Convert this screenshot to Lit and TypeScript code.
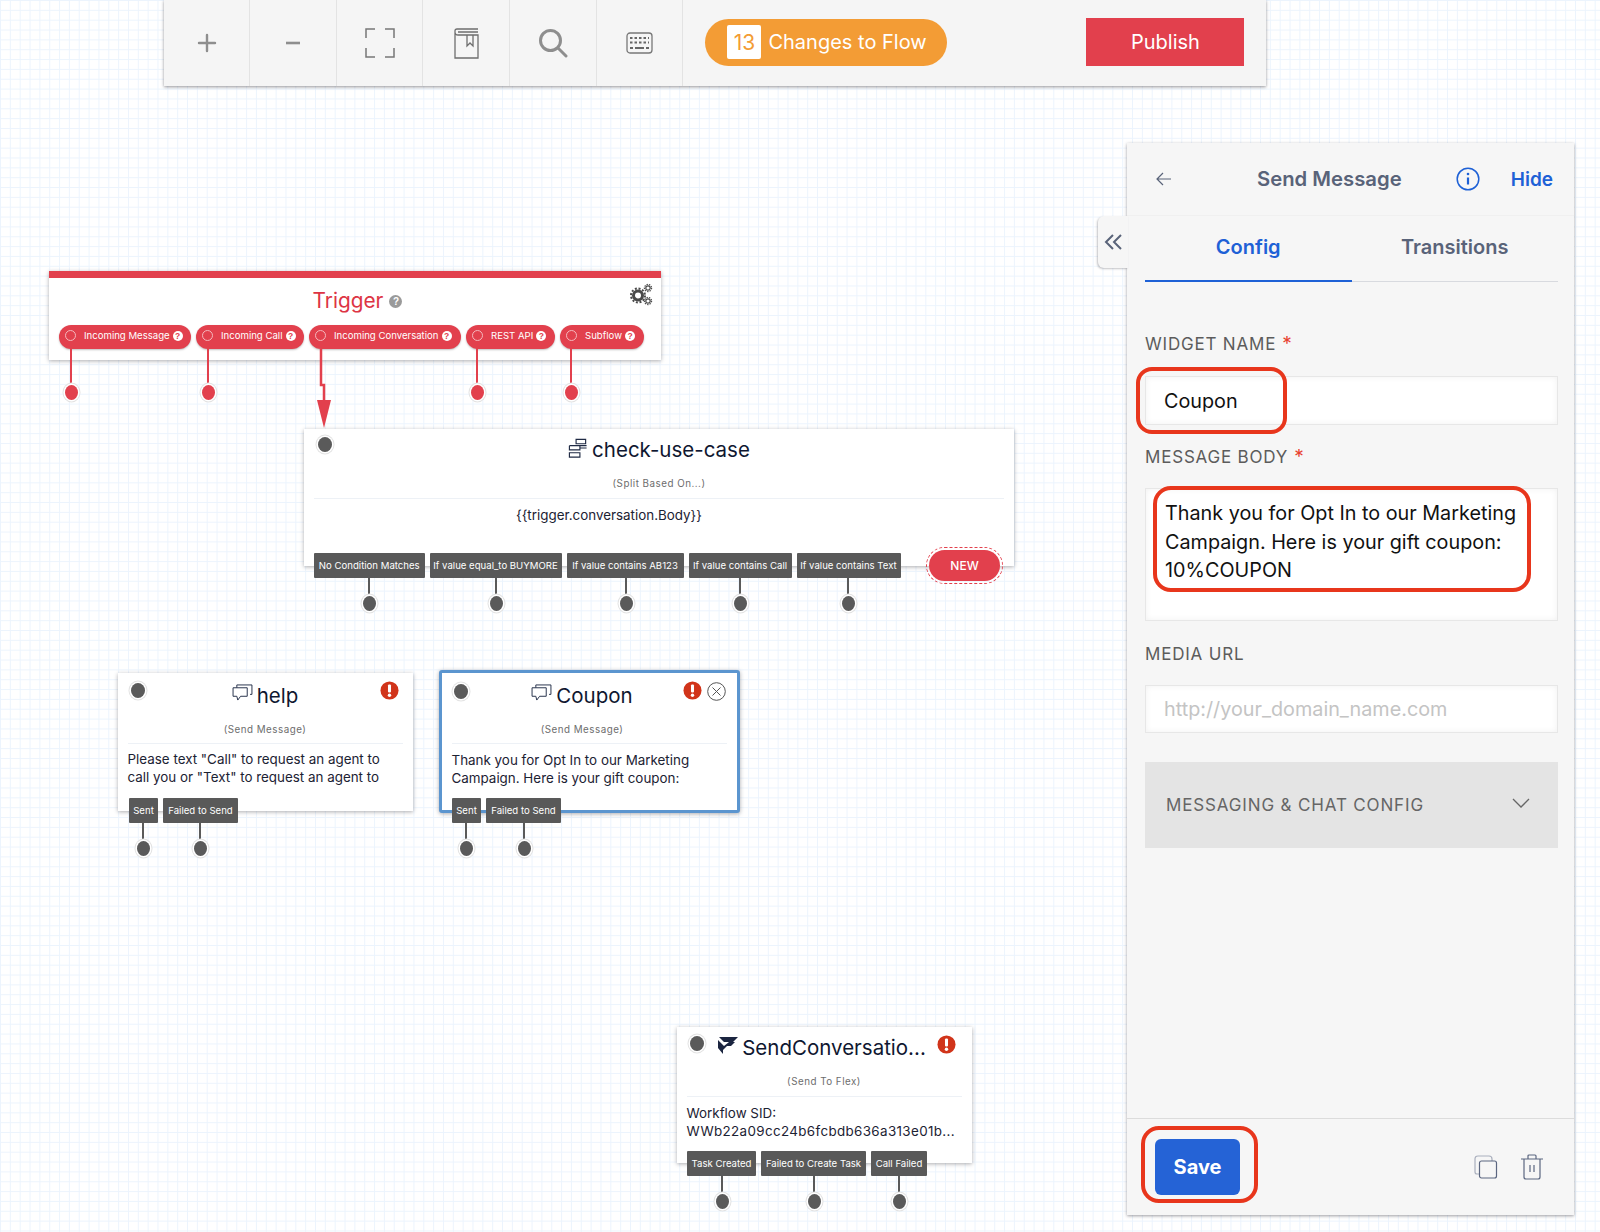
import { LitElement, html, css } from "lit";
import { customElement, property } from "lit/decorators.js";

const posStyle = (x: number, y: number, w?: number, h?: number) =>
  `left:${x}px;top:${y}px;` + (w !== undefined ? `width:${w}px;` : "") + (h !== undefined ? `height:${h}px;` : "");

const warn = html`<svg class="warn" viewBox="0 0 20 20" width="19" height="19"><circle cx="10" cy="10" r="9.5" fill="#d1341a"/><rect x="8.4" y="3.6" width="3.2" height="8.6" rx="1.2" fill="#fff"/><circle cx="10" cy="15" r="1.8" fill="#fff"/></svg>`;
const chat = html`<svg viewBox="0 0 22 18" width="21" height="17" fill="none" stroke="#1f2a44" stroke-width="1"><path d="M5 4V1h16v10h-2"/><path d="M1 4h15v9H9l-3 4-1-4H1z" fill="#fff"/></svg>`;

@customElement("flow-port")
class FlowPort extends LitElement {
  @property({ type: Number }) x = 0;
  @property({ type: Number }) y = 0;
  @property({ type: Number }) top = 0;
  @property() tone = "#5a5a5a";
  static styles = css`
    :host { position: absolute; display: block; width: 0; height: 0; }
    .line { position: absolute; width: 2px; left: -1px; }
    .dot { position: absolute; width: 13px; height: 15px; left: -6.5px; top: -7.5px; border-radius: 50%; box-shadow: 0 0 0 1.5px #fff, 0 0 0 2.5px #e3e3e3; }
  `;
  render() {
    return html`<div class="line" style="top:${this.top - this.y}px;height:${this.y - this.top}px;background:${this.tone}"></div>
      <div class="dot" style="background:${this.tone}"></div>`;
  }
  updated() { this.style.left = this.x + "px"; this.style.top = this.y + "px"; }
}

@customElement("app-root")
class AppRoot extends LitElement {
  static styles = css`
    :host { display: block; position: relative; width: 1600px; height: 1232px; overflow: hidden; background-color: #fff;
      background-image: linear-gradient(#ecf4fd 1px, transparent 1px), linear-gradient(90deg, #ecf4fd 1px, transparent 1px);
      background-size: 9.85px 9.85px; font-family: Inter, "Liberation Sans", sans-serif; color: #111; }
    * { box-sizing: border-box; }
    .toolbar { position: absolute; left: 164px; top: 0; width: 1102px; height: 86px; background: #f5f5f5; display: flex; align-items: center; box-shadow: 0 1px 3px rgba(60,60,70,.55); }
    .tool { width: 86.7px; height: 86px; border-right: 1px solid #e3e3e3; display: flex; align-items: center; justify-content: center; flex: none; }
    .pill { margin: -2px 0 0 22px; width: 242px; height: 47px; border-radius: 24px; background: #f39c35; display: flex; align-items: center; padding-left: 22px; gap: 7px; color: #fff; font-size: 20px; }
    .pill b { font-weight: 400; width: 34px; height: 34px; background: #fff; color: #f39c35; border-radius: 2px; display: flex; align-items: center; justify-content: center; font-size: 21px; }
    .publish { margin: -2px 0 0 139px; width: 158px; height: 48px; background: #e2404d; color: #fff; font-size: 20px; display: flex; align-items: center; justify-content: center; }

    .node { position: absolute; background: #fff; box-shadow: 0 1px 4px rgba(70,70,80,.45); }
    .trigger { border-top: 7px solid #e2404d; display: flex; flex-direction: column; align-items: center; padding: 8px 0 0 0; }
    .trigger h2 { margin: 0 0 0 5px; font-weight: 400; font-size: 20.8px; line-height: 30px; color: #dd3444; display: flex; align-items: center; gap: 6px; }
    .qm { display: inline-flex; align-items: center; justify-content: center; width: 13px; height: 13px; border-radius: 50%; background: #9a9a9a; color: #fff; font: 700 10px "Liberation Sans", sans-serif; }
    .gear { position: absolute; right: 8px; top: 5px; }
    .trow { position: absolute; left: 10px; top: 47px; display: flex; gap: 5px; }
    .tp { height: 24px; border-radius: 12px; background: #e2404d; color: #fff; font-size: 9.6px; display: flex; align-items: center; padding: 0 0 3px 6px; gap: 8px; white-space: nowrap; box-shadow: 0 1px 2px rgba(0,0,0,.25); }
    .tp i { width: 11px; height: 11px; border-radius: 50%; border: 1px solid #f4b8bd; flex: none; }
    .tp .qm { background: #fff; color: #e2404d; width: 10px; height: 10px; font-size: 8.5px; margin-left: -5px; }

    .title { height: 45px; display: flex; align-items: flex-end; justify-content: center; gap: 4px; font-size: 20.5px; line-height: 26px; color: #0f1730; white-space: nowrap; }
    .title svg { margin-bottom: 8px; }
    .sub { text-align: center; font-size: 9.8px; letter-spacing: .5px; color: #6d6d6d; line-height: 14px; }
    .rule { height: 1px; background: #edf1f6; margin: 8px 10px 0; }
    .body { font-size: 13.4px; line-height: 18px; color: #1c2233; padding: 7px 10px 0; white-space: nowrap; }
    .sid { letter-spacing: .36px; }
    .in { position: absolute; width: 14px; height: 15px; border-radius: 50%; background: #5a5a5a; box-shadow: 0 0 0 1.5px #fff, 0 0 0 2.5px #e3e3e3; }
    .warn { position: absolute; }
    .outs { position: absolute; display: flex; gap: 5px; }
    .out { height: 25px; background: #595959; color: #fff; font-size: 9.6px; display: flex; align-items: center; justify-content: center; white-space: nowrap; border-radius: 1px; }
    .new { position: absolute; left: 929px; top: 550px; width: 71px; height: 31px; border-radius: 16px; background: #e2404d; color: #fff; font-size: 12px; font-weight: 500; display: flex; align-items: center; justify-content: center; }
    .newring { position: absolute; left: 926px; top: 547px; width: 77px; height: 37px; border-radius: 19px; border: 1.5px dashed #e2404d; }
    .selected { border: 3px solid #5b95cf; border-radius: 3px; }

    .arrow { position: absolute; left: 0; top: 0; pointer-events: none; }

    .panel { position: absolute; left: 1127px; top: 143px; width: 447px; height: 1072px; background: #f6f6f6; box-shadow: 0 1px 3px rgba(60,60,70,.5); display: flex; flex-direction: column; }
    .phead { height: 73px; display: flex; align-items: center; padding: 0 21px 0 29px; border-bottom: 1px solid #f0f0f0; flex: none; position: relative; }
    .phead h3 { margin: 0 0 2px; position: absolute; left: 130px; font-size: 20.3px; font-weight: 600; color: #596379; }
    .hide { margin-left: auto; font-size: 19px; font-weight: 600; color: #1e61d6; }
    .info { position: absolute; left: 329px; }
    .tabs { margin: 0 16px 0 18px; height: 66px; display: flex; border-bottom: 1px solid #d8dadf; flex: none; }
    .tab { width: 50%; display: flex; align-items: center; justify-content: center; font-size: 20px; font-weight: 600; color: #596379; padding-bottom: 3px; }
    .tab.on { color: #1e61d6; border-bottom: 2px solid #1e61d6; height: 66px; padding-bottom: 3px; }
    .form { padding: 0 16px 0 18px; flex: 1; display: flex; flex-direction: column; }
    .lbl { font-size: 17px; letter-spacing: .8px; color: #5c5c5c; line-height: 20px; }
    .lbl em { color: #e8402f; font-style: normal; margin-left: 6px; font-size: 19px; line-height: 16px; }
    .input { background: #fff; border: 1px solid #e7e7e7; display: flex; align-items: center; padding-left: 18px; font-size: 19.8px; color: #111; box-shadow: inset 0 0 6px rgba(0,0,0,.06); }
    .ta { height: 133px; align-items: flex-start; padding: 10px 0 0 19px; line-height: 28.5px; }
    .ph { color: #c4c4c4; }
    .acc { margin-top: 29px; height: 86px; background: #e4e4e4; display: flex; align-items: center; justify-content: space-between; padding: 0 28px 0 21px; font-size: 17px; letter-spacing: .85px; color: #666; }
    .pfoot { height: 97px; border-top: 1px solid #dcdcdc; flex: none; display: flex; align-items: center; padding: 0 30px 0 28px; }
    .save { width: 85px; height: 56px; border-radius: 6px; background: #2563d6; color: #fff; font-size: 20px; font-weight: 700; display: flex; align-items: center; justify-content: center; }
    .picons { margin-left: auto; display: flex; gap: 22px; align-items: center; }
    .collapse { position: absolute; left: 1098px; top: 216px; width: 30px; height: 52px; background: #f6f6f6; border-radius: 6px 0 0 6px; box-shadow: -1px 1px 2px rgba(60,60,70,.3); display: flex; align-items: center; justify-content: center; }
    .mark { position: absolute; border: 4px solid #e8361c; background: transparent; pointer-events: none; }
  `;

  outs(x: number, y: number, items: [string, number][]) {
    return html`<div class="outs" style="${posStyle(x, y)}">${items.map(([t, w]) => html`<div class="out" style="width:${w}px">${t}</div>`)}</div>`;
  }
  ports(y: number, top: number, xs: number[], tone = "#5a5a5a") {
    return xs.map((x) => html`<flow-port .x=${x} .y=${y} .top=${top} .tone=${tone}></flow-port>`);
  }

  render() {
    return html`
      <div class="toolbar">
        <div class="tool" style="width:86px"><svg width="20" height="20" viewBox="0 0 20 20" stroke="#8e8e8e" stroke-width="2.4" stroke-linecap="round"><path d="M10 2v16M2 10h16"/></svg></div>
        <div class="tool"><svg width="16" height="4" viewBox="0 0 16 4" stroke="#8e8e8e" stroke-width="2.6"><path d="M1 2h14"/></svg></div>
        <div class="tool"><svg width="30" height="30" viewBox="0 0 30 30" fill="none" stroke="#777" stroke-width="1.5"><path d="M10 1H1v9M20 1h9v9M10 29H1v-9M20 29h9v-9"/></svg></div>
        <div class="tool"><svg width="25" height="31" viewBox="0 0 25 31" fill="none" stroke="#6e6e6e" stroke-width="1.3"><path d="M24 1H3Q1 1 1 3v27h23V7H4Q1 7 1 4M4 4h20"/><path d="M13 7v11l3-3 3 3V7"/></svg></div>
        <div class="tool"><svg width="30" height="30" viewBox="0 0 30 30" fill="none" stroke="#8e8e8e" stroke-width="3"><circle cx="12.5" cy="12.5" r="10"/><path d="M20 20l8 8" stroke-linecap="round"/></svg></div>
        <div class="tool"><svg width="27" height="22" viewBox="0 0 27 22" fill="none"><rect x="1" y="1" width="25" height="20" rx="3" stroke="#777" stroke-width="1.3"/><path d="M4 6h19M4 10.500h19" stroke="#666" stroke-width="2" stroke-dasharray="2.500 2"/><path d="M4 16h3M9 16h9M20 16h3" stroke="#666" stroke-width="2"/></svg></div>
        <div class="pill"><b>13</b>Changes to Flow</div>
        <div class="publish">Publish</div>
      </div>

      <div class="node trigger" style="${posStyle(49, 271, 612, 89)}">
        <h2>Trigger <span class="qm">?</span></h2>
        <svg class="gear" width="24" height="24" viewBox="0 0 24 24" fill="none" stroke="#4a4a4a"><circle cx="9" cy="12.500" r="4.500" stroke-width="3"/><circle cx="9" cy="12.500" r="7" stroke-width="2" stroke-dasharray="2 1.700"/><circle cx="19" cy="5" r="2.200" stroke-width="1.200"/><circle cx="19" cy="5" r="3.600" stroke-width="1.200" stroke-dasharray="1.400 1.100"/><circle cx="19" cy="18" r="2.200" stroke-width="1.200"/><circle cx="19" cy="18" r="3.600" stroke-width="1.200" stroke-dasharray="1.400 1.100"/></svg>
        <div class="trow">
          <div class="tp" style="width:132px"><i></i>Incoming Message <span class="qm">?</span></div>
          <div class="tp" style="width:108px"><i></i>Incoming Call <span class="qm">?</span></div>
          <div class="tp" style="width:152px"><i></i>Incoming Conversation <span class="qm">?</span></div>
          <div class="tp" style="width:89px"><i></i>REST API <span class="qm">?</span></div>
          <div class="tp" style="width:84px"><i></i>Subflow <span class="qm">?</span></div>
        </div>
      </div>

      <div class="node" style="${posStyle(304, 429, 710, 137)}">
        <div class="in" style="left:14px;top:8px"></div>
        <div class="title" style="height:34px">
          <svg viewBox="0 0 20 22" width="20" height="21" fill="none" stroke="#1f2a44" stroke-width="1.200" style="margin-bottom:4px"><path d="M8 1.500h10v4.500H8zM1 8h18M1 8v4.500h11V8M12 10.500h7M1 15.500h11V20H1zM12 10.500"/></svg>
          check-use-case
        </div>
        <div class="sub" style="margin-top:14px">(Split Based On...)</div>
        <div class="rule" style="margin-top:7px"></div>
        <div class="body" style="padding:7px 100px 0 0;text-align:center">{{trigger.conversation.Body}}</div>
      </div>
      <div class="newring"></div>
      <div class="new">NEW</div>

      <div class="node" style="${posStyle(117.500, 673, 295, 138)}">
        <div class="in" style="left:13.500px;top:10px"></div>
        <div class="title" style="height:36px">${chat}help</div>
        <div class="sub" style="margin-top:14px">(Send Message)</div>
        <div class="rule" style="margin-top:6px"></div>
        <div class="body" style="padding-top:6px">Please text "Call" to request an agent to<br />call you or "Text" to request an agent to</div>
        <span style="position:absolute;left:262px;top:8px">${warn}</span>
      </div>
      <div class="node selected" style="${posStyle(438.500, 670, 301, 143)}">
        <div class="in" style="left:12px;top:11px"></div>
        <div class="title" style="height:36px;padding-right:14px">${chat}Coupon</div>
        <div class="sub" style="margin-top:14px;padding-right:14px">(Send Message)</div>
        <div class="rule" style="margin-top:6px"></div>
        <div class="body">Thank you for Opt In to our Marketing<br />Campaign. Here is your gift coupon:</div>
        <span style="position:absolute;left:241px;top:8px">${warn}</span>
        <svg style="position:absolute;left:265px;top:9px" width="19" height="19" viewBox="0 0 19 19" fill="none" stroke="#555" stroke-width="1"><circle cx="9.500" cy="9.500" r="8.800"/><path d="M5.500 5.500l8 8M13.500 5.500l-8 8"/></svg>
      </div>

      <div class="node" style="${posStyle(676.500, 1027, 295, 136)}">
        <div class="in" style="left:13px;top:9px"></div>
        <div class="title" style="height:34px">
          <svg viewBox="0 0 20 18" width="20" height="18" fill="#1b2540" style="margin:0 0 6px -4px"><path d="M1 0h19l-5 5H6L1 0zM0 3l6 6 5-4h6l-4 4H9l-4 4v4L0 11z"/></svg>
          SendConversatio...
        </div>
        <div class="sub" style="margin-top:14px">(Send To Flex)</div>
        <div class="rule" style="margin-top:7px"></div>
        <div class="body">Workflow SID:<br /><span class="sid">WWb22a09cc24b6fcbdb636a313e01b...</span></div>
        <span style="position:absolute;left:260px;top:8px">${warn}</span>
      </div>

      <svg class="arrow" width="400" height="440"><path d="M321 349v36h3v20" fill="none" stroke="#e2404d" stroke-width="2.500"/><path d="M317 400h14l-7 28z" fill="#e2404d"/></svg>
      ${this.ports(392, 348, [71, 208, 477, 571], "#e2404d")}
      ${this.ports(603, 575, [369, 496, 626, 740, 848])}
      ${this.ports(848, 820, [143, 200, 466, 524])}
      ${this.ports(1201, 1170, [722, 814, 899])}
      ${this.outs(314, 553, [["No Condition Matches", 110.500], ["If value equal_to BUYMORE", 132], ["If value contains AB123", 117], ["If value contains Call", 103], ["If value contains Text", 104]])}
      ${this.outs(129, 798, [["Sent", 29], ["Failed to Send", 75]])}
      ${this.outs(452, 798, [["Sent", 29], ["Failed to Send", 75]])}
      ${this.outs(687, 1151, [["Task Created", 69], ["Failed to Create Task", 105], ["Call Failed", 56]])}

      <div class="panel">
        <div class="phead">
          <svg width="16" height="14" viewBox="0 0 16 14" fill="none" stroke="#596379" stroke-width="1.200"><path d="M15 7H1M7 1L1 7l6 6"/></svg>
          <h3>Send Message</h3>
          <svg class="info" width="24" height="24" viewBox="0 0 24 24" fill="none" stroke="#1e61d6" stroke-width="1.500"><circle cx="12" cy="12" r="10.800"/><path d="M12 10.500v7" stroke-width="2.200"/><circle cx="12" cy="7" r="1.300" fill="#1e61d6" stroke="none"/></svg>
          <span class="hide">Hide</span>
        </div>
        <div class="tabs"><div class="tab on">Config</div><div class="tab">Transitions</div></div>
        <div class="form">
          <div class="lbl" style="margin-top:52px">WIDGET NAME<em>*</em></div>
          <div class="input" style="height:49px;margin-top:22px">Coupon</div>
          <div class="lbl" style="margin-top:22px">MESSAGE BODY<em>*</em></div>
          <div class="input ta" style="margin-top:21px">Thank you for Opt In to our Marketing<br />Campaign. Here is your gift coupon:<br />10%COUPON</div>
          <div class="lbl" style="margin-top:23px">MEDIA URL</div>
          <div class="input ph" style="height:48px;margin-top:21px">http://your_domain_name.com</div>
          <div class="acc">MESSAGING &amp; CHAT CONFIG
            <svg width="18" height="11" viewBox="0 0 18 11" fill="none" stroke="#666" stroke-width="1.300" style="margin-bottom:4px"><path d="M1 1l8 8 8-8"/></svg></div>
        </div>
        <div class="pfoot">
          <div class="save">Save</div>
          <div class="picons">
            <svg width="24" height="24" viewBox="0 0 24 24" fill="none" stroke="#5b6680" stroke-width="1.200"><path d="M5 19H3Q1 19 1 17V4Q1 1 4 1h11q3 0 3 3v2" stroke="#a9afbd"/><rect x="5.500" y="6" width="17" height="17" rx="2"/></svg>
            <svg width="24" height="26" viewBox="0 0 24 26" fill="none" stroke="#5b6680" stroke-width="1.200"><path d="M1 5h22M8 5V2q0-1 1-1h6q1 0 1 1v3M4 5v18q0 2 2 2h12q2 0 2-2V5M10 11v7M14 11v7"/></svg>
          </div>
        </div>
      </div>
      <div class="collapse"><svg width="20" height="16" viewBox="0 0 20 16" fill="none" stroke="#596379" stroke-width="2" style="margin:0 0 0 1px"><path d="M9 1L2 8l7 7M17 1l-7 7 7 7"/></svg></div>

      <div class="mark" style="${posStyle(1136, 367, 151, 67)};border-radius:16px"></div>
      <div class="mark" style="${posStyle(1153, 486, 378, 106)};border-radius:18px"></div>
      <div class="mark" style="${posStyle(1141, 1126, 117, 77)};border-radius:18px"></div>
    `;
  }
}
